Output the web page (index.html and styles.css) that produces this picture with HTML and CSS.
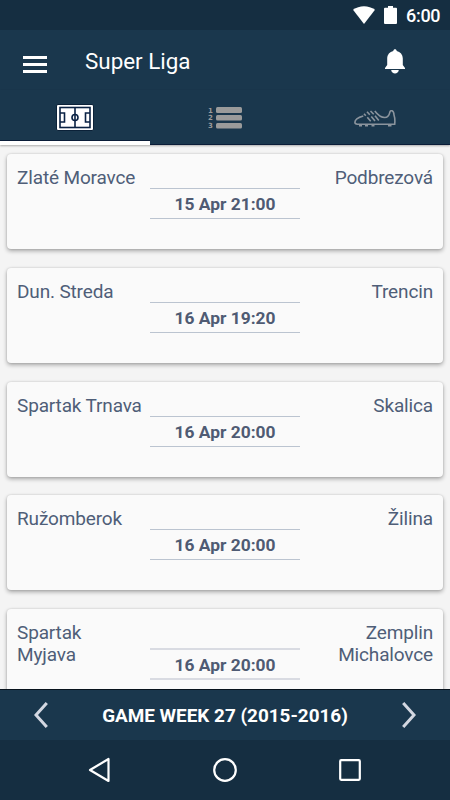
FILE: index.html
```
<!DOCTYPE html>
<html lang="en">
<head>
    <meta charset="UTF-8">
    <meta name="viewport" content="width=device-width, initial-scale=1.0">
    <title>Super Liga</title>
    <link rel="stylesheet" href="styles.css">
</head>
<body>
    <div class="app">
        <div class="status-bar">
            <svg class="icon-wifi" width="22" height="18" viewBox="0 0 22 18" fill="#fff">
                <path d="M0 3.8C6.3-1.1 15.7-1.1 22 3.8L11 18z"/>
            </svg>
            <svg class="icon-battery" width="13" height="18" viewBox="0 0 13 18" fill="#fff">
                <path d="M4 0h5v1.8h3a1 1 0 0 1 1 1V17a1 1 0 0 1-1 1H1a1 1 0 0 1-1-1V2.8a1 1 0 0 1 1-1h3z"/>
            </svg>
            <span class="clock">6:00</span>
        </div>
        <header class="toolbar">
            <div class="menu-button">
                <span></span>
                <span></span>
                <span></span>
            </div>
            <h1 class="title">Super Liga</h1>
            <svg class="icon-bell" width="20" height="25" viewBox="0 0 20 25" fill="#fff">
                <path d="M0 20v-1l2.2-3V9.500C2.200 5.500 4.800 2.700 8.300 1.900 8.300-.4 11.700-.4 11.700 1.900c3.500.8 6.100 3.600 6.100 7.600V16L20 19v1z"/>
                <path d="M6.200 21h7.600c-.3 4.600-7.300 4.600-7.600 0z"/>
            </svg>
        </header>
        <nav class="tabs">
            <div class="tab active">
                <svg width="38" height="27" viewBox="0 0 38 27" fill="none">
                    <rect x=".5" y=".5" width="37" height="26" rx="1.500" fill="#fff" stroke="#0b2138"/>
                    <g stroke="#0a2244" stroke-width="1.600">
                        <rect x="4" y="3.500" width="30" height="20"/>
                        <path d="M19 3.500v20M4 9h4.500v9H4M34 9h-4.500v9H34"/>
                        <circle cx="19" cy="13.500" r="3"/>
                    </g>
                </svg>
            </div>
            <div class="tab">
                <svg width="34" height="22" viewBox="0 0 34 22" fill="#9b9b9b">
                    <rect x="8" y="0" width="26" height="6" rx="1.500"/>
                    <rect x="8" y="8" width="26" height="5.500" rx="1.500"/>
                    <rect x="8" y="16" width="26" height="5.500" rx="1.500"/>
                    <g class="tab-numbers">
                        <text x="0" y="5.500">1</text>
                        <text x="0" y="13.200">2</text>
                        <text x="0" y="21.200">3</text>
                    </g>
                </svg>
            </div>
            <div class="tab">
                <svg width="42" height="17" viewBox="0 0 42 17" fill="none" stroke="#8b949d" stroke-width="1.600">
                    <path d="M9.300 6C4.500 7.300.9 9.500.9 12.300c0 1.500 1 1.900 2.500 1.900h37.300c.3-2.800.4-6-.7-9.200-.3-5.500-3.700-5.200-4.200-2.600-.8 3.800-2.800 5.100-5 5.100-3.300 0-5.800-1-10-6.500"/>
                    <path d="M10 3.800l1.800 2M13.300 7.300l3.400 4M13 1.800l2.800 3M17.300 6.500l3.700 4.500M16.500 1l3.200 3.300M21 5.800l3.800 4.700"/>
                    <path d="M5 15.500h3M11 15.500h3M17.500 15.500h3M34 15.500h3.500" stroke-width="2"/>
                </svg>
            </div>
        </nav>

        <main class="matches">
            <div class="match">
                <div class="team">Zlaté Moravce</div>
                <div class="kickoff">15 Apr 21:00</div>
                <div class="team away">Podbrezová</div>
            </div>
            <div class="match">
                <div class="team">Dun. Streda</div>
                <div class="kickoff">16 Apr 19:20</div>
                <div class="team away">Trencin</div>
            </div>
            <div class="match">
                <div class="team">Spartak Trnava</div>
                <div class="kickoff">16 Apr 20:00</div>
                <div class="team away">Skalica</div>
            </div>
            <div class="match">
                <div class="team">Ružomberok</div>
                <div class="kickoff">16 Apr 20:00</div>
                <div class="team away">Žilina</div>
            </div>
            <div class="match two-lines">
                <div class="team">Spartak<br>Myjava</div>
                <div class="kickoff">16 Apr 20:00</div>
                <div class="team away">Zemplin<br>Michalovce</div>
            </div>
        </main>

        <div class="week-bar">
            <svg width="14" height="26" viewBox="0 0 14 26" fill="none" stroke="#d3d7e1" stroke-width="3">
                <path d="M12.800 1L2 13l10.800 12"/>
            </svg>
            <span class="week">GAME WEEK 27 (2015-2016)</span>
            <svg width="14" height="26" viewBox="0 0 14 26" fill="none" stroke="#d3d7e1" stroke-width="3">
                <path d="M1.200 1L12 13 1.200 25"/>
            </svg>
        </div>
        <div class="system-nav">
            <svg width="24" height="26" viewBox="0 0 24 26">
                <path d="M20.500 2v22L2 13z"/>
            </svg>
            <svg width="26" height="26" viewBox="0 0 26 26">
                <circle cx="13" cy="13" r="10.800"/>
            </svg>
            <svg width="24" height="24" viewBox="0 0 24 24">
                <rect x="2.200" y="2.200" width="19.600" height="19.600" rx="1"/>
            </svg>
        </div>
    </div>
</body>
</html>
```
FILE: styles.css
```
*{
    box-sizing: border-box;
}
body{
    margin: 0;
    font-family: Roboto, sans-serif;
    background-color: #f4f4f4;
}
svg{
    display: block;
}
.app{
    height: 800px;
    width: 450px;
    display: flex;
    flex-direction: column;
    overflow: hidden;
}
.status-bar{
    height: 30px;
    background-color: #152e41;
    color: #fff;
    display: flex;
    justify-content: flex-end;
    align-items: center;
    padding-right: 10px;
    flex-shrink: 0;
}
.icon-battery{
    margin: 0 9px;
}
.clock{
    font-size: 18px;
    line-height: 22px;
    font-weight: 500;
    letter-spacing: -0.3px;
    padding-top: 1px;
    width: 34px;
}
.toolbar{
    height: 60px;
    background-color: #1a374d;
    color: #fff;
    display: flex;
    align-items: center;
    padding: 2px 45px 0 23px;
    flex-shrink: 0;
}
.menu-button{
    width: 24px;
    padding-top: 7px;
    display: flex;
    flex-direction: column;
    gap: 4px;
}
.menu-button span{
    height: 3px;
    background-color: #fff;
}
.title{
    flex: 1;
    margin: 0 0 0 38px;
    padding-bottom: 1px;
    font-size: 22.4px;
    line-height: 26px;
    font-weight: 400;
}
.tabs{
    height: 55px;
    background-color: #1a374d;
    display: flex;
    position: relative;
    z-index: 1;
    border-bottom: 1px solid #0a1c38;
    box-shadow: 0 1px 2px rgba(0,0,0,0.3);
    flex-shrink: 0;
}
.tab{
    flex: 1;
    display: flex;
    justify-content: center;
    align-items: center;
    padding-top: 2px;
}
.tab.active{
    border-bottom: 4px solid #fff;
    margin-bottom: -1px;
    box-shadow: inset 0 -1px 0 #0a1c38;
    padding-top: 4px;
}
.tab-numbers{
    font: bold 7px "DejaVu Sans", sans-serif;
}
.matches{
    flex: 1;
    min-height: 0;
    overflow: hidden;
    padding: 9px 7px 0;
    border-bottom: 1px solid #08131c;
}
.match{
    height: 95px;
    margin-bottom: 18.75px;
    padding: 13px 10px 0;
    background-color: #fafafa;
    border-radius: 4px;
    box-shadow: 0 2px 4px rgba(0,0,0,0.32), 0 0 2px rgba(0,0,0,0.15);
    display: grid;
    grid-template-columns: 133px 150px 133px;
    align-items: start;
}
.team{
    font-size: 19px;
    line-height: 22px;
    letter-spacing: -0.15px;
    color: #4f5e78;
    white-space: nowrap;
}
.away{
    text-align: right;
}
.kickoff{
    height: 31px;
    margin-top: 21px;
    border-top: 1px solid #bbc4d0;
    border-bottom: 1px solid #bbc4d0;
    color: #4f5b73;
    font-size: 17.4px;
    font-weight: 700;
    line-height: 31px;
    text-align: center;
}
.two-lines .kickoff{
    margin-top: 26px;
    height: 32px;
    border-width: 2px;
    border-color: #d9dbe2;
    line-height: 30px;
}
.week-bar{
    height: 50px;
    background-color: #1a374d;
    color: #fff;
    display: flex;
    justify-content: space-between;
    align-items: center;
    padding: 0 34px 0 34px;
    flex-shrink: 0;
}
.week{
    font-size: 18.9px;
    font-weight: 700;
    padding-top: 1px;
}
.system-nav{
    height: 60px;
    background-color: #152e41;
    display: flex;
    justify-content: space-between;
    align-items: center;
    padding: 0 88px;
    flex-shrink: 0;
}
.system-nav svg{
    fill: none;
    stroke: #fff;
    stroke-width: 2.2;
    stroke-linejoin: round;
}
```
